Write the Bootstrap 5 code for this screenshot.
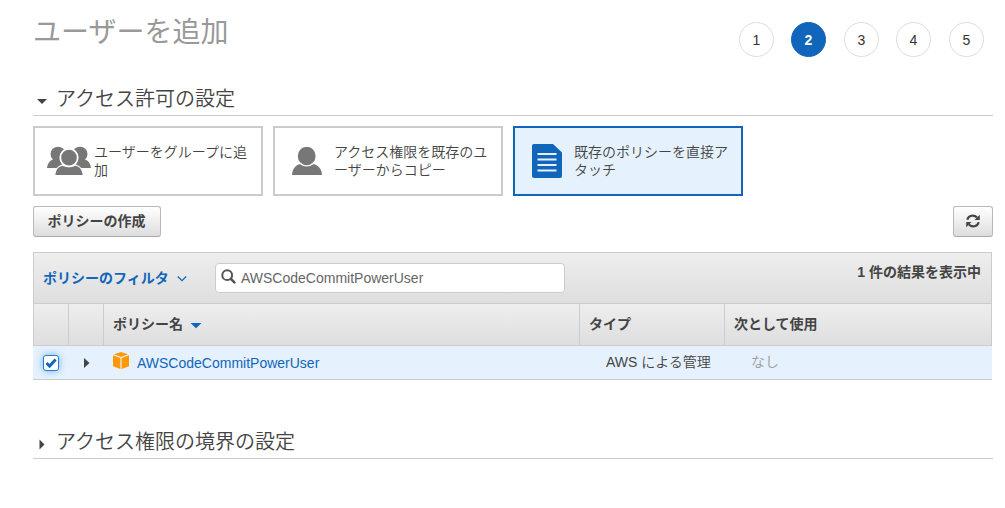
<!DOCTYPE html>
<html lang="ja">
<head>
<meta charset="utf-8">
<meta name="viewport" content="width=device-width, initial-scale=1">
<title>ユーザーを追加</title>
<link href="https://cdn.jsdelivr.net/npm/bootstrap@5.3.0/dist/css/bootstrap.min.css" rel="stylesheet">
<style>
body{font-family:"Liberation Sans","Noto Sans CJK JP",sans-serif;font-size:14px;line-height:18px;color:#444;background:#fff;overflow:hidden}
svg{display:block;flex:none}
.page{width:960px;margin-left:33px}
.page-head{height:85px}
.page-head h1{font-size:28px;line-height:34px;font-weight:400;color:#999;padding-top:16px}
.steps{gap:17px;padding:22px 9px 0 0}
.step{width:35px;height:35px;border:1px solid #ddd;color:#333}
.step:nth-child(odd):not(:first-child){margin-left:1px}
.step.active{background:#1166bb;border-color:#1166bb;color:#fff;font-weight:700}
.section-head{height:31px;border-bottom:1px solid #ccc;padding-left:3px}
.section-head h2{font-size:20px;line-height:26px;font-weight:350;color:#444;padding-bottom:2px}
.section-head svg{margin:3px 8px 0 0}
.section-head .closed{margin-top:1px}
.options{gap:10px;margin-top:10px}
.option{width:230px;height:70px;border:2px solid #ccc;padding:0 10px 0 12px;color:#444;font-weight:350}
.option .pic{width:47px;flex:none;display:flex;justify-content:center;padding-right:3px}
.option .pic.single{padding-right:7px}
.option.selected{border-color:#1166bb;background:#e5f1fd}
.aws-btn{height:31px;width:128px;border:1px solid #b8b8b8;border-radius:3px;background:linear-gradient(#fff,#ddd);padding:0 1px 2px 0;font-size:14px;line-height:18px;font-weight:700;color:#444;border-bottom-color:#aaa}
.aws-btn.square{width:40px}
.grid-box{width:959px;margin-top:15px}
.bar{height:52px;border:1px solid #ccc;background:linear-gradient(#eee,#dedede);padding:10px 10px 0 9px}
.filter{color:#1166bb;font-weight:700;width:172px;height:30px}
.search{width:350px;height:30px;border:1px solid #ccc;border-radius:4px;background:#fff;padding-left:6px;color:#666}
.search svg{margin:-3px 5px 0 -1px}
.cols{display:grid;grid-template-columns:35px 35px 476px 145px 1fr}
.head{height:42px;border:1px solid #ccc;border-top:0;background:linear-gradient(#eee,#dedede);font-weight:700}
.head>div{border-right:1px solid #ccc;display:flex;align-items:center;padding:0 0 2px 9px}
.head>div:last-child{border-right:0}
.head svg{margin:2px 0 0 7px}
.entry{height:34px;background:#e5f1fd;border-bottom:1px solid #ccc}
.entry>div{display:flex;align-items:center}
.entry .type{padding:0 0 1px 27px;font-weight:350}
.tick{width:16px;height:16px;border:1px solid #2a7ccc;border-radius:3px;background:#fff;box-shadow:0 0 7px #6db3fa}
</style>
</head>
<body>
<main class="page">
  <header class="page-head d-flex justify-content-between align-items-start">
    <h1 class="m-0">ユーザーを追加</h1>
    <div class="steps d-flex">
      <span class="step rounded-circle d-flex align-items-center justify-content-center">1</span>
      <span class="step active rounded-circle d-flex align-items-center justify-content-center">2</span>
      <span class="step rounded-circle d-flex align-items-center justify-content-center">3</span>
      <span class="step rounded-circle d-flex align-items-center justify-content-center">4</span>
      <span class="step rounded-circle d-flex align-items-center justify-content-center">5</span>
    </div>
  </header>

  <div class="section-head d-flex align-items-center">
    <svg width="12" height="12"><path d="M1 3h10L6 8z" fill="#444"/></svg>
    <h2 class="m-0">アクセス許可の設定</h2>
  </div>

  <div class="options d-flex">
    <div class="option d-flex align-items-center">
      <div class="pic">
        <svg width="46" height="30" viewBox="0 0 46 30" fill="#777">
          <path d="M1 22c.7-5 3.400-7.700 6.600-8.700h6L18 22zM28 22l4-8.700h6c3.800 1 6.400 3.700 7 8.700z"/>
          <ellipse cx="12" cy="8" rx="7.500" ry="7.300"/><ellipse cx="34" cy="8" rx="7.500" ry="7.300"/>
          <path d="M9.400 29c.6-6 3.200-8.500 7.600-9.600h12c4.400 1.100 7 3.600 7.600 9.600z" stroke="#fff" stroke-width="2.400"/>
          <ellipse cx="23" cy="11.700" rx="8.700" ry="8.800" stroke="#fff" stroke-width="1.800"/>
          <path d="M9.400 29c.6-6 3.200-8.500 7.100-9.300 3.900 2.800 9.100 2.800 13 0 3.900.8 6.500 3.300 7.100 9.300z"/>
        </svg>
      </div>
      <div>ユーザーをグループに追加</div>
    </div>
    <div class="option d-flex align-items-center">
      <div class="pic single">
        <svg width="30" height="28" viewBox="0 0 30 28" fill="#777">
          <path d="M0 28c.4-6 3-9.500 7.300-10.800h14.900C26.700 18.500 29.600 22 30 28z"/>
          <ellipse cx="14.700" cy="9" rx="9.600" ry="9.800" stroke="#fff" stroke-width="1.300"/>
        </svg>
      </div>
      <div>アクセス権限を既存のユーザーからコピー</div>
    </div>
    <div class="option selected d-flex align-items-center">
      <div class="pic single">
        <svg width="30" height="34" viewBox="0 0 30 34">
          <path d="M2 0h19l9 8.500V32q0 2-2 2H2q-2 0-2-2V2q0-2 2-2z" fill="#1166bb"/>
          <path d="M5.500 10h19M5.500 15.500h19M5.500 21h19M5.500 26.500h19" stroke="#e5f1fd" stroke-width="2.200"/>
        </svg>
      </div>
      <div>既存のポリシーを直接アタッチ</div>
    </div>
  </div>

  <div class="d-flex justify-content-between" style="margin-top:10px">
    <button class="aws-btn" type="button">ポリシーの作成</button>
    <button class="aws-btn square d-flex align-items-center justify-content-center" type="button" aria-label="更新">
      <svg width="14" height="14" viewBox="0 0 14 14">
        <path d="M1.300 5.800C2.500 1.300 8 .3 11 3.600M12.700 8.200C11.500 12.700 6 13.700 3 10.400" fill="none" stroke="#444" stroke-width="2.200"/>
        <path d="M13.800.7v5.200H8.500zM.2 13.300V8.100h5.300z" fill="#444"/>
      </svg>
    </button>
  </div>

  <section class="grid-box">
    <div class="bar d-flex">
      <div class="filter d-flex align-items-center">ポリシーのフィルタ
        <svg class="ms-2" width="10" height="8" viewBox="0 0 10 8"><path d="M.8 2.500 5 6.600l4.200-4.100" fill="none" stroke="#1166bb" stroke-width="1.200"/></svg>
      </div>
      <div class="search d-flex align-items-center">
        <svg width="15" height="15" viewBox="0 0 15 15" fill="none" stroke="#555"><circle cx="6.200" cy="6.200" r="4.900" stroke-width="2"/><path d="m9.800 9.800 3.600 3.600" stroke-width="2.600" stroke-linecap="round"/></svg>
        <span>AWSCodeCommitPowerUser</span>
      </div>
      <div class="fw-bold ms-auto">1 件の結果を表示中</div>
    </div>
    <div class="head cols">
      <div></div><div></div>
      <div>ポリシー名<svg width="12" height="12"><path d="M.5 4h11L6 9.300z" fill="#1166bb"/></svg></div>
      <div>タイプ</div>
      <div>次として使用</div>
    </div>
    <div class="entry cols">
      <div style="padding-left:10px"><span class="tick"><svg width="14" height="14" viewBox="0 0 14 14"><path d="m2.500 7 3.100 3.100 6-6.600" fill="none" stroke="#1166bb" stroke-width="2.900"/></svg></span></div>
      <div style="padding-left:16px"><svg width="6" height="10"><path d="M0 0v10l5.500-5z" fill="#444"/></svg></div>
      <div style="padding-left:10px">
        <svg style="margin:-5px 8px 0 0" width="16" height="17" viewBox="0 0 16 17" fill="#f90"><path d="M8 0l7 2.300L8 5 1 2.300zM0 3.200l7.400 2.700V17L0 14.300zM16 3.200 8.600 5.900V17l7.400-2.700z"/></svg>
        <span style="color:#1166bb">AWSCodeCommitPowerUser</span>
      </div>
      <div class="type">AWS による管理</div>
      <div class="type" style="color:#999">なし</div>
    </div>
  </section>

  <div class="section-head d-flex align-items-center" style="margin-top:48px">
    <svg class="closed" width="12" height="12"><path d="M3.500 1.500v10l5-5z" fill="#444"/></svg>
    <h2 class="m-0">アクセス権限の境界の設定</h2>
  </div>
</main>
<script src="https://cdn.jsdelivr.net/npm/bootstrap@5.3.0/dist/js/bootstrap.bundle.min.js"></script>
</body>
</html>
